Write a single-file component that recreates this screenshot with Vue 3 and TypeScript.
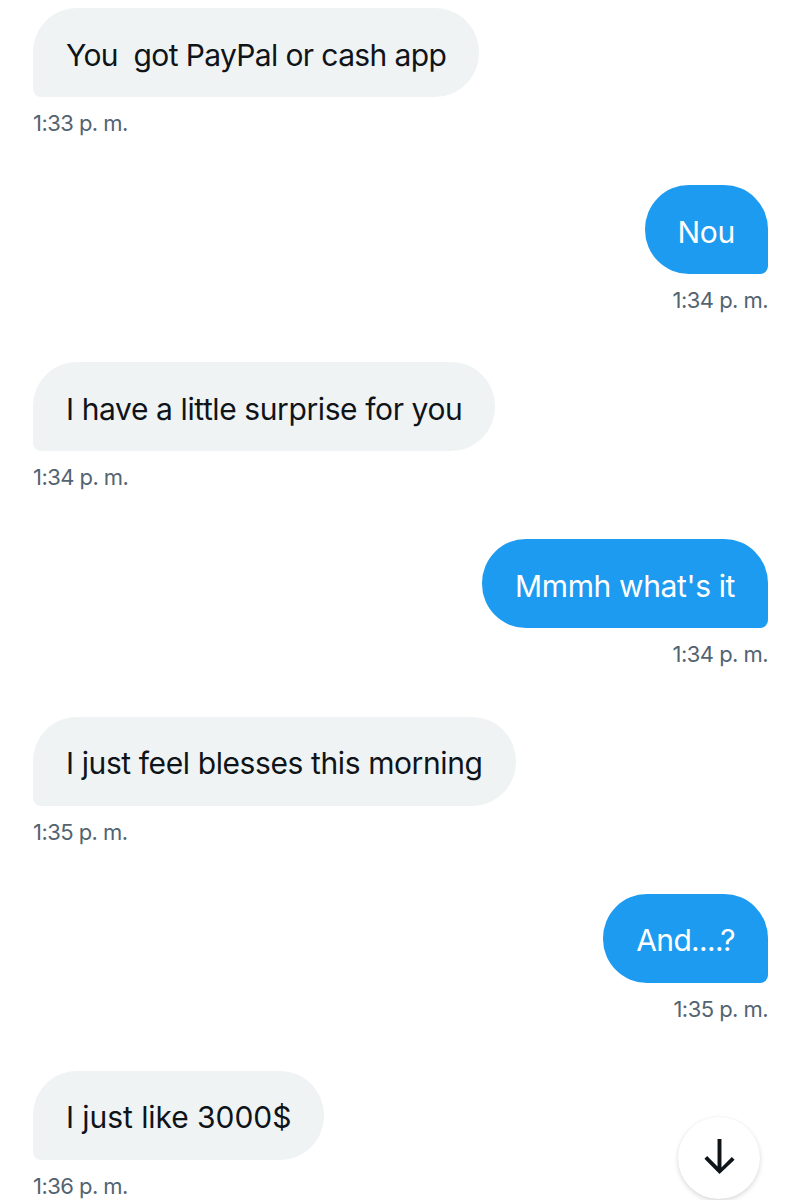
<script setup lang="ts">
interface Msg { text: string; time: string; mine: boolean; track: number }
const messages: Msg[] = [
  { text: 'You\u00a0 got PayPal or cash app', time: '1:33 p. m.', mine: false, track: -0.63 },
  { text: 'Nou', time: '1:34 p. m.', mine: true, track: -0.3 },
  { text: 'I have a little surprise for you', time: '1:34 p. m.', mine: false, track: -0.4 },
  { text: "Mmmh what's it", time: '1:34 p. m.', mine: true, track: -0.37 },
  { text: 'I just feel blesses this morning', time: '1:35 p. m.', mine: false, track: -0.4 },
  { text: 'And....?', time: '1:35 p. m.', mine: true, track: -0.67 },
  { text: 'I just like 3000$', time: '1:36 p. m.', mine: false, track: -0.06 },
]
</script>

<template>
  <div class="page">
    <div class="list">
      <div v-for="(m, i) in messages" :key="i" class="msg" :class="{ mine: m.mine }">
        <div class="bubble" :style="{ letterSpacing: m.track + 'px' }">{{ m.text }}</div>
        <div class="time">{{ m.time }}</div>
      </div>
    </div>
    <button class="down" aria-label="Scroll to bottom">
      <svg width="47" height="47" viewBox="0 0 24 24" fill="#0f1419">
        <path d="M13 3.59v14.5l5.3-5.3 1.4 1.42L12 21.41l-7.7-7.7 1.4-1.42 5.3 5.3V3.59h2z" />
      </svg>
    </button>
  </div>
</template>

<style>
html, body { margin: 0; background: #fff; }
</style>

<style scoped>
.page {
  position: relative;
  width: 801px;
  height: 1200px;
  overflow: hidden;
  background: #fff;
  font-family: Inter, "Liberation Sans", sans-serif;
}
.list {
  display: flex;
  flex-direction: column;
  gap: 47.17px;
  padding: 8px 33px 0;
}
.msg {
  display: flex;
  flex-direction: column;
  align-items: flex-start;
}
.msg.mine { align-items: flex-end; }
.bubble {
  box-sizing: border-box;
  height: 89px;
  padding: 4px 33px 0;
  display: flex;
  align-items: center;
  white-space: pre;
  font-size: 30px;
  color: #0f1419;
  background: #eff3f4;
  border-radius: 44px 44px 44px 8px;
}
.mine .bubble {
  color: #fff;
  background: #1d9bf0;
  border-radius: 44px 44px 8px 44px;
}
.time {
  margin-top: 11px;
  height: 30px;
  line-height: 30px;
  font-size: 22px;
  letter-spacing: -0.55px;
  color: #536471;
}
.down {
  position: absolute;
  right: 41px;
  top: 1117px;
  width: 82px;
  height: 82px;
  padding: 0 0 5px;
  display: flex;
  align-items: center;
  justify-content: center;
  border: 0;
  border-radius: 50%;
  background: #fff;
  box-shadow: 0 2px 5px rgba(0, 0, 0, 0.15), 0 0 2px rgba(0, 0, 0, 0.04);
}
</style>
